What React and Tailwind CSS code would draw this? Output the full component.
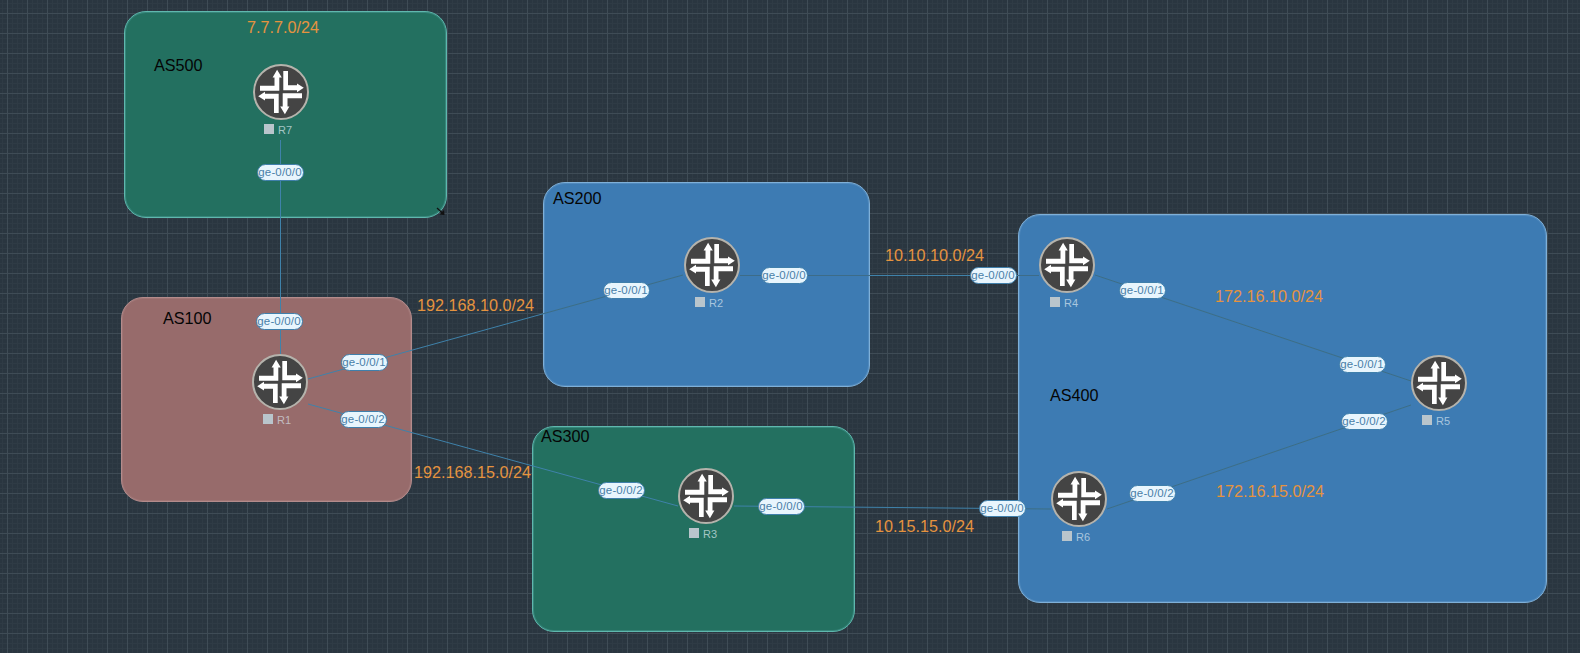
const routers = [
  { name: "R7", x: 281, y: 92, labelColor: "text-[#a3c6c4]" },
  { name: "R1", x: 280, y: 382, labelColor: "text-[#c2bcc0]" },
  { name: "R2", x: 712, y: 265, labelColor: "text-[#a9c6de]" },
  { name: "R3", x: 706, y: 496, labelColor: "text-[#a3c6c4]" },
  { name: "R4", x: 1067, y: 265, labelColor: "text-[#a9c6de]" },
  { name: "R5", x: 1439, y: 383, labelColor: "text-[#a9c6de]" },
  { name: "R6", x: 1079, y: 499, labelColor: "text-[#a9c6de]" },
];

const links = [
  [280.5, 140, 280.5, 354],
  [308, 379, 683, 275],
  [308, 404, 678, 506],
  [740, 275.5, 1039, 275.5],
  [1095, 275, 1411, 381],
  [1107, 509, 1411, 405],
  [734, 506, 1051, 509],
];

const ports = [
  { text: "ge-0/0/0", x: 280, y: 172 },
  { text: "ge-0/0/0", x: 279, y: 321 },
  { text: "ge-0/0/1", x: 364, y: 362 },
  { text: "ge-0/0/2", x: 363, y: 419 },
  { text: "ge-0/0/1", x: 626, y: 290 },
  { text: "ge-0/0/0", x: 784, y: 275 },
  { text: "ge-0/0/0", x: 993, y: 275 },
  { text: "ge-0/0/1", x: 1142, y: 290 },
  { text: "ge-0/0/1", x: 1362, y: 364 },
  { text: "ge-0/0/2", x: 1364, y: 421 },
  { text: "ge-0/0/0", x: 1002, y: 508 },
  { text: "ge-0/0/2", x: 1152, y: 493 },
  { text: "ge-0/0/2", x: 621, y: 490 },
  { text: "ge-0/0/0", x: 781, y: 506 },
];

const asLabels = [
  { text: "AS500", x: 154, y: 65 },
  { text: "AS100", x: 163, y: 318 },
  { text: "AS200", x: 553, y: 198 },
  { text: "AS300", x: 541, y: 436 },
  { text: "AS400", x: 1050, y: 395 },
];

const subnets = [
  { text: "7.7.7.0/24", x: 247, y: 27 },
  { text: "192.168.10.0/24", x: 417, y: 305 },
  { text: "192.168.15.0/24", x: 414, y: 472 },
  { text: "10.10.10.0/24", x: 885, y: 255 },
  { text: "10.15.15.0/24", x: 875, y: 526 },
  { text: "172.16.10.0/24", x: 1215, y: 296 },
  { text: "172.16.15.0/24", x: 1216, y: 491 },
];

function RouterIcon() {
  return (
    <svg width="56" height="56" viewBox="0 0 56 56" className="block">
      <circle cx="28" cy="28" r="27" fill="#444444" stroke="#b5b3ac" strokeWidth="2" />
      <g fill="#ffffff">
        <polygon points="24.1,5.8 28.8,13.5 26.3,13.5 26.3,26.7 7,26.7 7,21.7 21.5,21.7 21.5,13.5 19.6,13.5" />
        <polygon points="30.3,7 35,7 35,21.2 44,21.2 44,19.4 50.8,23.8 44,28.2 44,26.3 30.3,26.3" />
        <polygon points="25.7,49 21,49 21,34.8 12,34.8 12,36.6 5.2,32.2 12,27.8 12,29.7 25.7,29.7" />
        <polygon points="31.9,50.2 27.2,42.5 29.7,42.5 29.7,29.3 49,29.3 49,34.3 34.5,34.3 34.5,42.5 36.4,42.5" />
      </g>
    </svg>
  );
}

function Router({ name, x, y, labelColor }) {
  return (
    <div className="absolute w-14 flex flex-col" style={{ left: x - 28, top: y - 28 }}>
      <RouterIcon />
      <div className="flex items-start gap-1 pl-[11px] mt-[2px]">
        <div className="w-[10px] h-[10px] mt-[2px] bg-[#b9c5cc]" />
        <div className={`text-[11px] leading-[14px] mt-[1px] ${labelColor}`}>{name}</div>
      </div>
    </div>
  );
}

export default function App() {
  return (
    <div className="relative w-[1580px] h-[653px] overflow-hidden font-['Liberation_Sans',sans-serif] bg-[#2a3640] bg-[linear-gradient(to_right,#3f4c56_1px,transparent_1px),linear-gradient(to_bottom,#3f4c56_1px,transparent_1px),linear-gradient(to_right,#2f3b45_1px,transparent_1px),linear-gradient(to_bottom,#2f3b45_1px,transparent_1px)] bg-size-[20px_20px,20px_20px,5px_5px,5px_5px] bg-position-[7px_0px,0px_13px,2px_0px,0px_3px]">
      {/* AS areas */}
      <div className="absolute left-[124px] top-[11px] w-[323px] h-[207px] rounded-[22px] border border-[#5fb8ae] bg-[#237060] shadow-[inset_0_0_0_1px_#37867b]" />
      <div className="absolute left-[121px] top-[297px] w-[291px] h-[205px] rounded-[22px] border border-[#b48c8c] bg-[#976b6b] shadow-[inset_0_0_0_1px_#a07575]" />
      <div className="absolute left-[543px] top-[182px] w-[327px] h-[205px] rounded-[22px] border border-[#7fb0d8] bg-[#3d7bb3] shadow-[inset_0_0_0_1px_#5089bd]" />
      <div className="absolute left-[532px] top-[426px] w-[323px] h-[206px] rounded-[22px] border border-[#5fb8ae] bg-[#237060] shadow-[inset_0_0_0_1px_#37867b]" />
      <div className="absolute left-[1018px] top-[214px] w-[529px] h-[389px] rounded-[22px] border border-[#7fb0d8] bg-[#3d7bb3] shadow-[inset_0_0_0_1px_#5089bd]" />

      {/* links, darker where they run over the blue areas */}
      <svg className="absolute inset-0" width="1580" height="653">
        <defs>
          <clipPath id="blue-areas">
            <rect x="543" y="182" width="327" height="205" />
            <rect x="1018" y="214" width="529" height="389" />
          </clipPath>
        </defs>
        {links.map((l, i) => (
          <line key={i} x1={l[0]} y1={l[1]} x2={l[2]} y2={l[3]} stroke="#3f82aa" strokeWidth="1" />
        ))}
        <g clipPath="url(#blue-areas)">
          {links.map((l, i) => (
            <line key={i} x1={l[0]} y1={l[1]} x2={l[2]} y2={l[3]} stroke="#3d6c88" strokeWidth="1" />
          ))}
        </g>
        <path d="M437 208 L443.5 214" stroke="#111111" strokeWidth="1.2" fill="none" />
        <path d="M444.5 215 L444 210 L439.5 214.5 Z" fill="#111111" />
      </svg>

      {asLabels.map((a) => (
        <div key={a.text} className="absolute text-[16.2px] leading-[18px] text-[#050505]" style={{ left: a.x, top: a.y - 9 }}>
          {a.text}
        </div>
      ))}

      {subnets.map((s) => (
        <div key={s.text} className="absolute text-[16.2px] leading-[18px] whitespace-nowrap text-[#e5933f]" style={{ left: s.x, top: s.y - 9 }}>
          {s.text}
        </div>
      ))}

      {routers.map((r) => (
        <Router key={r.name} {...r} />
      ))}

      {ports.map((p, i) => (
        <div
          key={i}
          className="absolute w-[47px] h-[17px] flex items-center justify-center rounded-full border border-[#3f7fab] bg-[#e8f5fd] text-[11.5px] tracking-[0.15px] leading-none text-[#4a7fa8] whitespace-nowrap"
          style={{ left: p.x - 23.5, top: p.y - 8 }}
        >
          {p.text}
        </div>
      ))}
    </div>
  );
}
